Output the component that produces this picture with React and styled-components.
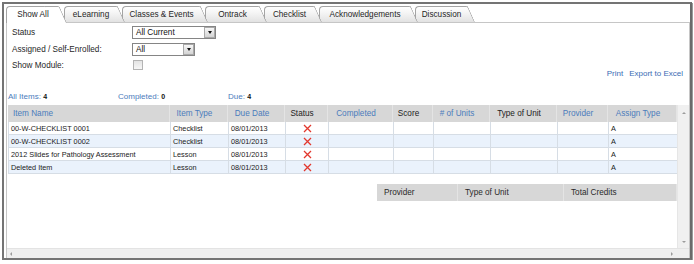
import React from "react";
import styled, { createGlobalStyle } from "styled-components";

const GlobalStyle = createGlobalStyle`
  html, body { margin: 0; padding: 0; background: #fff; }
  body { font-family: "Liberation Sans", Arial, sans-serif; }
  * { box-sizing: border-box; }
`;

const Frame = styled.div`
  margin: 2px 0 0 2px;
  width: 690px;
  height: 258px;
  border: 2px solid #747474;
  border-right-color: #6a6a6a;
  box-shadow: 1px 1px 0 #9a9a9a;
  padding: 2px 0 0 2px;
  display: flex;
  flex-direction: column;
  background: #fff;
`;

const TabBar = styled.div`
  display: flex;
  height: 16px;
  flex: none;
`;

const tabBg = (active) =>
  active ? "#fff" : "linear-gradient(#ffffff 0%, #f3f3f3 45%, #e2e2e2 100%)";

const Tab = styled.div`
  position: relative;
  z-index: ${(p) => (p.$active ? 20 : 10 - p.$order)};
  flex: none;
  width: ${(p) => p.$w}px;
  height: ${(p) => (p.$active ? 17 : 16)}px;
  margin-right: -3px;
  padding: 0 7px ${(p) => (p.$active ? 1 : 0)}px 0;
  display: flex;
  align-items: center;
  justify-content: center;
  font-size: 8.2px;
  color: #262626;
  &::before {
    content: "";
    position: absolute;
    left: 0;
    top: 0;
    bottom: 0;
    right: 10px;
    border-left: 1px solid #a4a4a4;
    border-top: 1px solid #a4a4a4;
    border-top-left-radius: 4px;
    background: ${(p) => tabBg(p.$active)};
  }
  &::after {
    content: "";
    position: absolute;
    right: 0;
    top: 0;
    bottom: 0;
    width: 14px;
    border-top: 1px solid #a4a4a4;
    border-right: 1px solid #a4a4a4;
    border-top-right-radius: 2px;
    background: ${(p) => tabBg(p.$active)};
    transform: skewX(24deg);
    transform-origin: 100% 100%;
  }
`;

const TabLabel = styled.span`
  position: relative;
  z-index: 1;
  white-space: nowrap;
`;

const Panel = styled.div`
  flex: 1;
  min-height: 0;
  border: 1px solid #c6c6c6;
  border-bottom: none;
  display: flex;
  flex-direction: column;
`;

const Filters = styled.div`
  display: flex;
  flex-direction: column;
  gap: 4px;
  padding: 3px 0 0 5px;
`;

const FilterRow = styled.div`
  display: flex;
  align-items: center;
  height: ${(p) => p.$h}px;
`;

const Label = styled.div`
  width: 120px;
  font-size: 8.2px;
  color: #1f1f1f;
  white-space: nowrap;
`;

const Select = styled.div`
  width: ${(p) => p.$w}px;
  height: 13px;
  border: 1px solid #858585;
  background: #fff;
  display: flex;
  align-items: center;
`;

const SelectValue = styled.span`
  padding-left: 3px;
  font-size: 8.2px;
  color: #111;
  white-space: nowrap;
`;

const SelectButton = styled.span`
  margin-left: auto;
  width: 11px;
  height: 11px;
  border: 1px solid #a9a9a9;
  background: linear-gradient(#f7f7f7, #d4d4d4);
  display: flex;
  align-items: center;
  justify-content: center;
  &::after {
    content: "";
    border-left: 2.5px solid transparent;
    border-right: 2.5px solid transparent;
    border-top: 3px solid #111;
  }
`;

const CheckBox = styled.div`
  width: 10px;
  height: 10px;
  margin-left: 1px;
  border: 1px solid #b4b4b4;
  background: linear-gradient(#e4e4e4, #f7f7f7);
`;

const LinkBar = styled.div`
  display: flex;
  justify-content: flex-end;
  gap: 6px;
  height: 10px;
  margin-top: -1px;
  padding-right: 6px;
  font-size: 8px;
  line-height: 10px;
`;

const Link = styled.span`
  color: #3a6cb4;
  white-space: nowrap;
`;

const Counts = styled.div`
  display: grid;
  grid-template-columns: repeat(3, 110px);
  height: 10px;
  margin-top: 13px;
  padding-left: 1px;
  line-height: 10px;
`;

const CountItem = styled.div`
  font-size: 8px;
  color: #4b7cbc;
  white-space: nowrap;
`;

const CountValue = styled.b`
  font-size: 7px;
  color: #111;
`;

const ScrollArea = styled.div`
  flex: 1;
  min-height: 0;
  margin-top: 3px;
  display: flex;
  flex-direction: column;
`;

const ScrollBody = styled.div`
  flex: 1;
  min-height: 0;
  display: flex;
`;

const ScrollContent = styled.div`
  flex: 1;
  min-width: 0;
  padding-left: 1px;
  display: flex;
  flex-direction: column;
  overflow: hidden;
`;

const VScroll = styled.div`
  flex: none;
  width: 12px;
  background: #f0f0f0;
  border-left: 1px solid #e6e6e6;
  display: flex;
  flex-direction: column;
  align-items: center;
  justify-content: space-between;
  padding: 7px 0 5px;
`;

const HScroll = styled.div`
  flex: none;
  height: 10px;
  background: #efefef;
  border-top: 1px solid #e3e3e3;
  display: flex;
  align-items: center;
  justify-content: space-between;
  padding: 0 16px 0 3px;
`;

const Arrow = styled.span`
  width: 0;
  height: 0;
  ${(p) =>
    p.$dir === "up"
      ? "border-left: 2px solid transparent; border-right: 2px solid transparent; border-bottom: 2px solid #9c9c9c;"
      : p.$dir === "down"
      ? "border-left: 2px solid transparent; border-right: 2px solid transparent; border-top: 2px solid #9c9c9c;"
      : p.$dir === "left"
      ? "border-top: 2px solid transparent; border-bottom: 2px solid transparent; border-right: 2px solid #9c9c9c;"
      : "border-top: 2px solid transparent; border-bottom: 2px solid transparent; border-left: 2px solid #9c9c9c;"}
`;

const COLS = "162px 58px 57px 43px 65px 40px 57px 67px 51px 69px";

const Table = styled.div`
  width: 669px;
  flex: none;
`;

const HeaderRow = styled.div`
  display: grid;
  grid-template-columns: ${(p) => p.$cols};
  height: 17px;
  background: #d7d7d7;
`;

const HeaderCell = styled.div`
  display: flex;
  align-items: center;
  justify-content: ${(p) => (p.$left ? "flex-start" : "center")};
  padding: ${(p) => (p.$left ? "0 0 0 5px" : "0 8px 0 0")};
  font-size: 8.2px;
  color: ${(p) => (p.$link ? "#4b7cbc" : "#222")};
  border-right: 1px solid #e4e4e4;
  white-space: nowrap;
  overflow: hidden;
`;

const BodyRow = styled.div`
  display: grid;
  grid-template-columns: ${COLS};
  height: 13px;
  border-bottom: 1px solid #d6dde5;
  border-left: 1px solid #d6dde5;
  background: ${(p) => (p.$alt ? "#eaf2fc" : "#fff")};
`;

const BodyCell = styled.div`
  display: flex;
  align-items: center;
  justify-content: ${(p) => (p.$center ? "center" : "flex-start")};
  padding-left: ${(p) => (p.$center ? 0 : 2)}px;
  padding-top: ${(p) => (p.$center ? 1 : 0)}px;
  font-size: 7.3px;
  color: #1a1a1a;
  border-right: 1px solid #d6dde5;
  white-space: nowrap;
  overflow: hidden;
`;

const Summary = styled.div`
  margin: 10px 0 0 auto;
  width: 300px;
  flex: none;
`;

const SummaryCell = styled(HeaderCell)`
  justify-content: flex-start;
  padding: 0 0 0 7px;
  color: #2a2a2a;
`;

const XIcon = () => (
  <svg width="9" height="9" viewBox="0 0 9 9">
    <path d="M1 1 L8 8 M8 1 L1 8" stroke="#e2382e" strokeWidth="1.3" fill="none" />
  </svg>
);

const tabs = [
  ["Show All", 61],
  ["eLearning", 61],
  ["Classes & Events", 86],
  ["Ontrack", 62],
  ["Checklist", 58],
  ["Acknowledgements", 99],
  ["Discussion", 60],
];

const headers = [
  { t: "Item Name", link: true, left: true },
  { t: "Item Type", link: true },
  { t: "Due Date", link: true },
  { t: "Status" },
  { t: "Completed", link: true },
  { t: "Score" },
  { t: "# of Units", link: true },
  { t: "Type of Unit" },
  { t: "Provider", link: true },
  { t: "Assign Type", link: true },
];

const rows = [
  ["00-W-CHECKLIST 0001", "Checklist", "08/01/2013"],
  ["00-W-CHECKLIST 0002", "Checklist", "08/01/2013"],
  ["2012 Slides for Pathology Assessment", "Lesson", "08/01/2013"],
  ["Deleted Item", "Lesson", "08/01/2013"],
];

export default function App() {
  return (
    <>
      <GlobalStyle />
      <Frame>
        <TabBar>
          {tabs.map(([t, w], i) => (
            <Tab key={t} $w={w} $order={i} $active={i === 0}>
              <TabLabel>{t}</TabLabel>
            </Tab>
          ))}
        </TabBar>
        <Panel>
          <Filters>
            <FilterRow $h={13}>
              <Label>Status</Label>
              <Select $w={84}>
                <SelectValue>All Current</SelectValue>
                <SelectButton />
              </Select>
            </FilterRow>
            <FilterRow $h={13}>
              <Label>Assigned / Self-Enrolled:</Label>
              <Select $w={63}>
                <SelectValue>All</SelectValue>
                <SelectButton />
              </Select>
            </FilterRow>
            <FilterRow $h={10}>
              <Label>Show Module:</Label>
              <CheckBox />
            </FilterRow>
          </Filters>
          <LinkBar>
            <Link>Print</Link>
            <Link>Export to Excel</Link>
          </LinkBar>
          <Counts>
            <CountItem>
              All Items: <CountValue>4</CountValue>
            </CountItem>
            <CountItem>
              Completed: <CountValue>0</CountValue>
            </CountItem>
            <CountItem>
              Due: <CountValue>4</CountValue>
            </CountItem>
          </Counts>
          <ScrollArea>
            <ScrollBody>
              <ScrollContent>
                <Table>
                  <HeaderRow $cols={COLS}>
                    {headers.map((h) => (
                      <HeaderCell key={h.t} $link={h.link} $left={h.left}>
                        {h.t}
                      </HeaderCell>
                    ))}
                  </HeaderRow>
                  {rows.map((r, i) => (
                    <BodyRow key={r[0]} $alt={i % 2 === 1}>
                      <BodyCell>{r[0]}</BodyCell>
                      <BodyCell>{r[1]}</BodyCell>
                      <BodyCell>{r[2]}</BodyCell>
                      <BodyCell $center>
                        <XIcon />
                      </BodyCell>
                      <BodyCell />
                      <BodyCell />
                      <BodyCell />
                      <BodyCell />
                      <BodyCell />
                      <BodyCell>A</BodyCell>
                    </BodyRow>
                  ))}
                </Table>
                <Summary>
                  <HeaderRow $cols="81px 106px 113px">
                    <SummaryCell>Provider</SummaryCell>
                    <SummaryCell>Type of Unit</SummaryCell>
                    <SummaryCell>Total Credits</SummaryCell>
                  </HeaderRow>
                </Summary>
              </ScrollContent>
              <VScroll>
                <Arrow $dir="up" />
                <Arrow $dir="down" />
              </VScroll>
            </ScrollBody>
            <HScroll>
              <Arrow $dir="left" />
              <Arrow $dir="right" />
            </HScroll>
          </ScrollArea>
        </Panel>
      </Frame>
    </>
  );
}
